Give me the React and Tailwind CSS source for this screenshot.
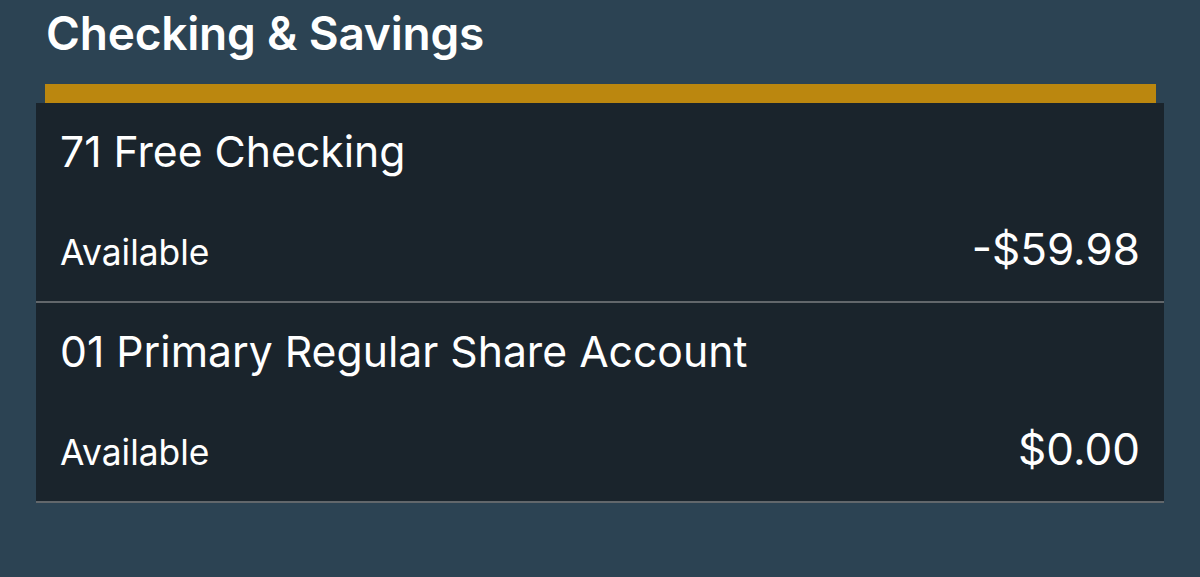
export default function App() {
  const rows = [
    { name: "71 Free Checking", amount: "-$59.98" },
    { name: "01 Primary Regular Share Account", amount: "$0.00" },
  ];
  return (
    <div
      className="w-[1200px] h-[577px] bg-[#2c4353] text-white overflow-hidden"
      style={{ fontFamily: "Inter, 'Noto Sans', sans-serif" }}
    >
      <div className="pl-[46px] pt-[8px] h-[84px]">
        <h1 className="text-[46px] font-semibold leading-[50px] tracking-[-0.2px]">Checking &amp; Savings</h1>
      </div>
      <div className="ml-[45px] w-[1111px] h-[19px] bg-[#bb870f]" />
      <div className="ml-[36px] w-[1128px] bg-[#1a242c]">
        {rows.map((r) => (
          <div key={r.name} className="border-b-2 border-[#62676b]">
            <div className="h-[198px] flex flex-col px-[24px]">
              <div className="pt-[24px] text-[42.7px] leading-[50px]">{r.name}</div>
              <div className="mt-auto mb-[28px] flex items-baseline justify-between">
                <span className="text-[35.4px] leading-[40px]">Available</span>
                <span className="text-[44px] leading-[48px]">{r.amount}</span>
              </div>
            </div>
          </div>
        ))}
      </div>
    </div>
  );
}
